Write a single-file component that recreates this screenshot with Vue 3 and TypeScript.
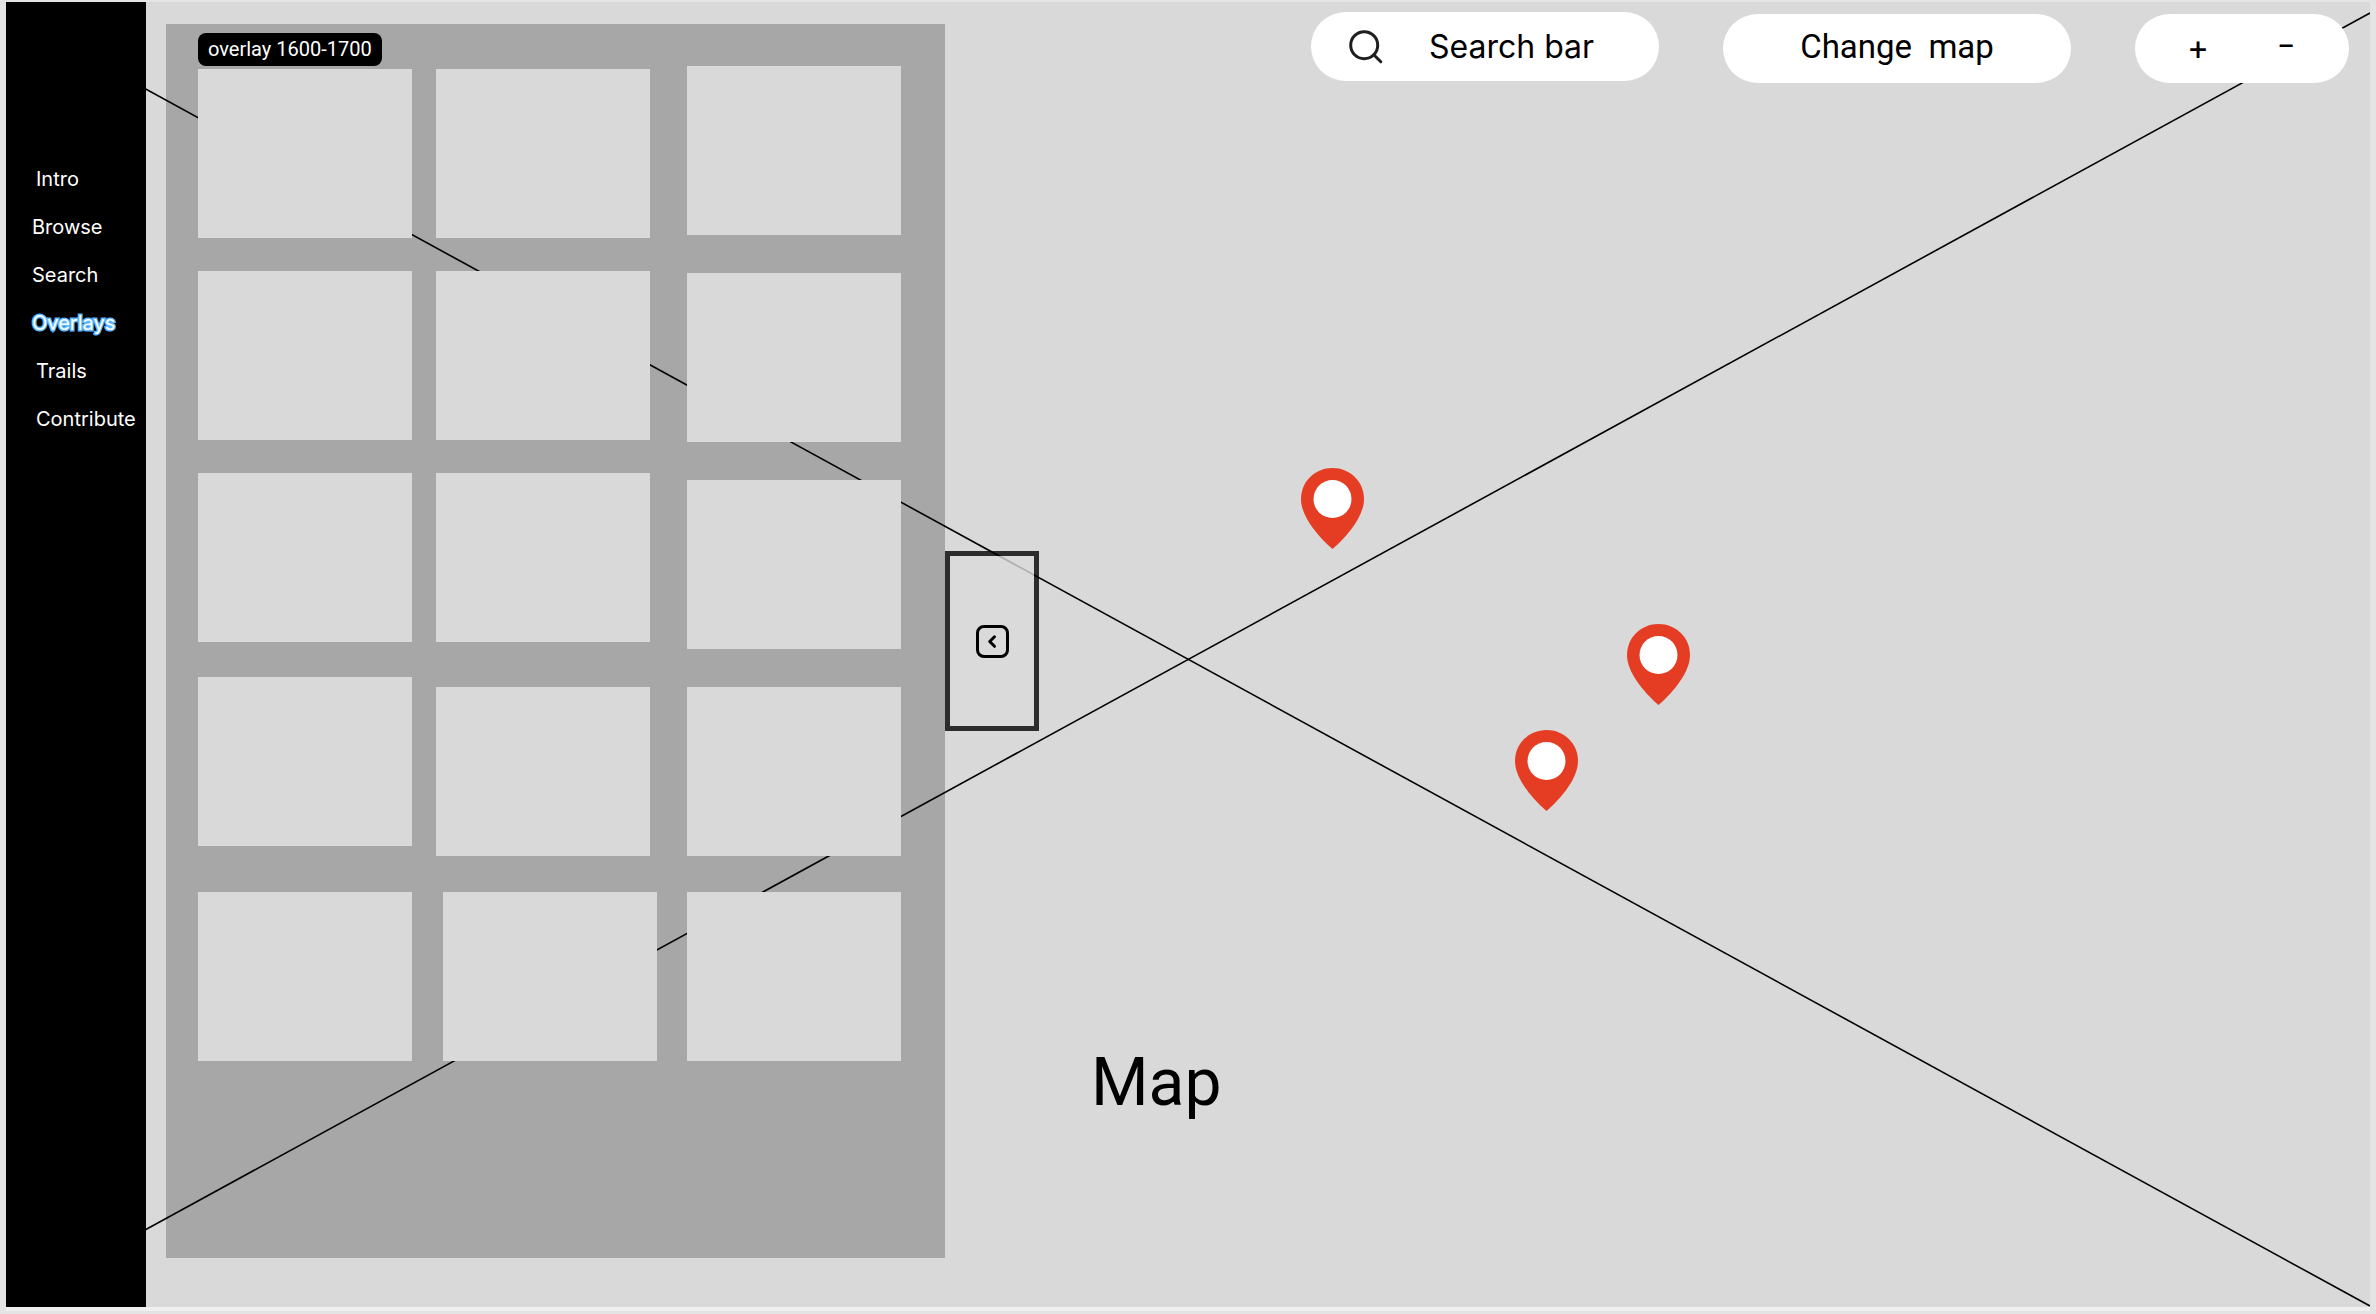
<script setup lang="ts">
import { ref } from 'vue'

interface NavItem {
  label: string
  indented: boolean
  active?: boolean
}

interface Pin {
  name: string
  left: number
  top: number
}

const navItems: NavItem[] = [
  { label: 'Intro', indented: true },
  { label: 'Browse', indented: false },
  { label: 'Search', indented: false },
  { label: 'Overlays', indented: false, active: true },
  { label: 'Trails', indented: true },
  { label: 'Contribute', indented: true },
]

// Space above each tile, and its indent, column by column
const columns: { above: number; indent: number }[][] = [
  [3, 33, 33, 35, 46].map((above) => ({ above, indent: 0 })),
  [3, 33, 33, 45, 36].map((above, i) => ({ above, indent: i === 4 ? 7 : 0 })),
  [0, 38, 38, 38, 36].map((above) => ({ above, indent: 0 })),
]

// Positions are percentages of the map area
const pins: Pin[] = [
  { name: 'Pin 1', left: 19.7, top: 35.7 },
  { name: 'Pin 2', left: 44.2, top: 47.7 },
  { name: 'Pin 3', left: 35.8, top: 55.8 },
]

const query = ref('')
</script>

<template>
  <div class="page">
    <div class="stage">
      <svg class="cross" viewBox="0 0 2364 1305" preserveAspectRatio="none" aria-hidden="true">
        <line x1="0" y1="10.5" x2="2364" y2="1304" />
        <line x1="0" y1="1304" x2="2364" y2="11" />
      </svg>

      <nav class="sidebar">
        <a
          v-for="item in navItems"
          :key="item.label"
          href="#"
          class="nav-link"
          :class="{ indented: item.indented, active: item.active }"
          >{{ item.label }}</a
        >
      </nav>

      <div class="drawer">
        <section class="panel">
          <h2 class="tag">overlay 1600-1700</h2>
          <div class="columns">
            <div v-for="(column, c) in columns" :key="c" class="column">
              <div
                v-for="(tile, t) in column"
                :key="t"
                class="tile"
                :style="{ marginTop: tile.above + 'px', marginLeft: tile.indent + 'px' }"
              ></div>
            </div>
          </div>
        </section>
        <button type="button" class="toggle" aria-label="Collapse panel">
          <svg width="33" height="33" viewBox="0 0 33 33" fill="none" stroke="#000" stroke-width="3">
            <rect x="1.5" y="1.5" width="30" height="30" rx="6.5" />
            <path d="M18.5 11.8 13.7 16.5l4.8 4.8" stroke-linecap="round" stroke-linejoin="round" />
          </svg>
        </button>
      </div>

      <main class="map">
        <header class="toolbar">
          <label class="pill search">
            <svg width="34" height="34" viewBox="0 0 34 34" fill="none" stroke="#1e1e1e" stroke-width="3">
              <circle cx="15.2" cy="15.2" r="13.5" />
              <path d="M24.8 24.8 31.8 31.8" stroke-linecap="round" />
            </svg>
            <input v-model="query" type="text" placeholder="Search bar" aria-label="Search bar" />
          </label>
          <div class="tools">
            <button type="button" class="pill change">Change&nbsp; map</button>
            <div class="pill zoom">
              <button type="button" class="zoom-in" aria-label="Zoom in">+</button>
              <button type="button" class="zoom-out" aria-label="Zoom out">−</button>
            </div>
          </div>
        </header>

        <button
          v-for="pin in pins"
          :key="pin.name"
          type="button"
          class="pin"
          :aria-label="pin.name"
          :style="{ left: pin.left + '%', top: pin.top + '%' }"
        >
          <svg width="63" height="81" viewBox="0 0 63 81">
            <path
              d="M31.5 0C14 0 0 13.6 0 31c0 17 16 36.500 31.500 50C47 67.500 63 48 63 31 63 13.600 49 0 31.500 0Z"
              fill="#e43d24"
            />
            <circle cx="31.5" cy="31" r="19" fill="#fff" />
          </svg>
        </button>

        <h1 class="title">Map</h1>
      </main>
    </div>
  </div>
</template>

<style>
body {
  margin: 0;
  background: #e4e4e4;
}
</style>

<style scoped>
.page {
  box-sizing: border-box;
  min-height: 100vh;
  padding: 2px 6px 3px;
  font-family: Roboto, 'Liberation Sans', sans-serif;
  color: #000;
}

.stage {
  position: relative;
  display: flex;
  min-height: calc(100vh - 9px);
  background: #d9d9d9;
  border-bottom: 4px solid #f0f0f0;
}

.cross {
  position: absolute;
  inset: 0;
  width: 100%;
  height: 100%;
}

.cross line {
  stroke: #000;
  stroke-width: 1.6;
}

.sidebar {
  position: relative;
  box-sizing: border-box;
  display: flex;
  flex: none;
  flex-direction: column;
  gap: 24px;
  width: 140px;
  padding: 165px 0 0 26px;
  background: #000;
}

.nav-link {
  color: #fff;
  font: 400 20px/24px Inter, sans-serif;
  text-decoration: none;
}

.nav-link.indented {
  padding-left: 4px;
}

.nav-link.active {
  -webkit-text-stroke: 3px #5db8ff;
  paint-order: stroke fill;
}

.drawer {
  display: flex;
  flex: none;
  align-items: center;
  margin: 22px 0 49px 20px;
}

.panel {
  box-sizing: border-box;
  align-self: stretch;
  width: 779px;
  padding: 9px 44px 32px 32px;
  background: #a7a7a7;
}

.tag {
  position: relative;
  width: fit-content;
  margin: 0;
  padding: 0 10px;
  border-radius: 8px;
  background: #000;
  color: #fff;
  font-size: 20px;
  font-weight: 400;
  line-height: 33px;
}

.columns {
  display: flex;
  gap: 24px;
}

.column {
  flex: none;
  width: 214px;
}

.column:last-child {
  margin-left: 13px;
}

.tile {
  position: relative;
  width: 214px;
  height: 169px;
  background: #d9d9d9;
}

.toggle {
  position: relative;
  display: flex;
  align-items: center;
  justify-content: center;
  box-sizing: border-box;
  width: 94px;
  height: 180px;
  padding: 0;
  border: 5px solid rgba(0, 0, 0, 0.8);
  background: rgba(217, 217, 217, 0.8);
  background-clip: padding-box;
}

.map {
  position: relative;
  display: flex;
  flex: 1;
  flex-direction: column;
  justify-content: space-between;
}

.toolbar {
  display: flex;
  justify-content: flex-end;
  gap: 64px;
  padding: 10px 21px 0 0;
}

.tools {
  display: flex;
  gap: 64px;
  padding-top: 2px;
}

.pill {
  box-sizing: border-box;
  display: flex;
  align-items: center;
  height: 69px;
  border: 0;
  border-radius: 35px;
  background: #fff;
  color: #000;
  font: 400 33px/40px Roboto, sans-serif;
}

.search {
  gap: 46px;
  width: 348px;
  padding: 0 20px 0 38px;
}

.search svg {
  flex: none;
}

.search input {
  flex: 1;
  min-width: 0;
  padding: 0;
  border: 0;
  outline: 0;
  background: transparent;
  color: #000;
  font: 400 32px/40px Inter, sans-serif;
}

.search input::placeholder {
  color: #000;
  opacity: 1;
}

.change {
  justify-content: center;
  width: 348px;
  padding: 0 0 4px;
}

.zoom {
  justify-content: center;
  gap: 48px;
  width: 214px;
}

.zoom button {
  width: 40px;
  padding: 0;
  border: 0;
  background: none;
  color: #000;
  font: 400 32px/40px Roboto, sans-serif;
}

.zoom .zoom-out {
  padding-bottom: 6px;
}

.pin {
  position: absolute;
  padding: 0;
  border: 0;
  background: none;
}

.pin svg {
  display: block;
}

.title {
  margin: 0;
  padding: 0 0 186px 52px;
  font-size: 66px;
  font-weight: 400;
  line-height: 76px;
}
</style>
